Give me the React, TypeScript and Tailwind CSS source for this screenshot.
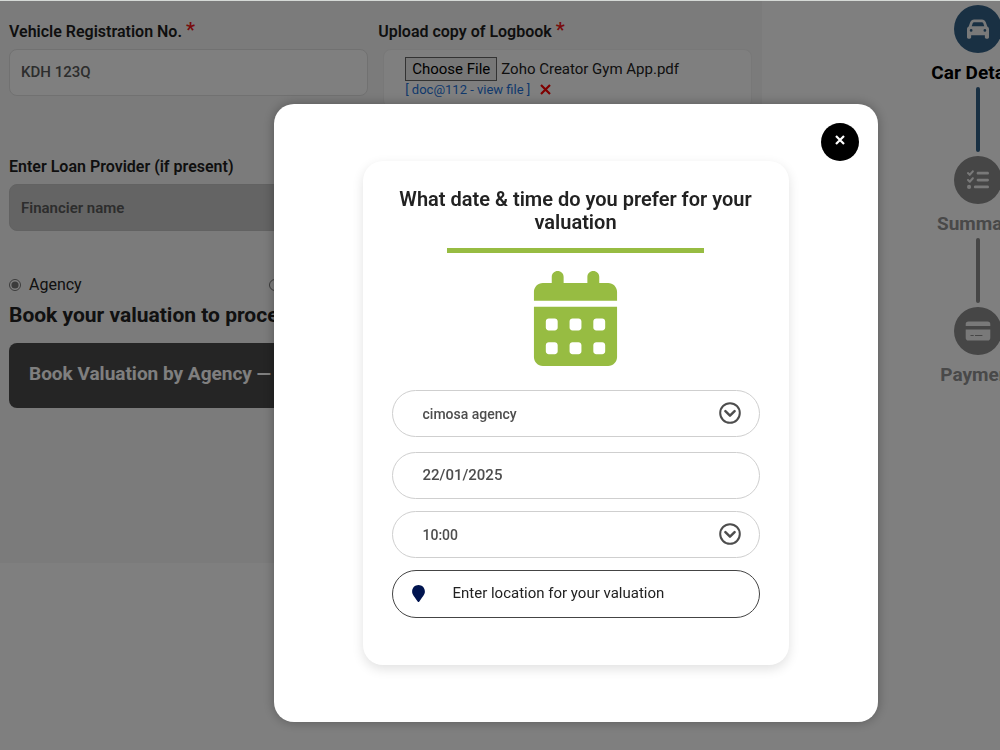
import { useRef } from "react";
import type { ReactNode } from "react";
import { FaCalendarDays, FaCar, FaListCheck } from "react-icons/fa6";
import { FaMapMarker } from "react-icons/fa";

function CardIcon() {
  return (
    <svg width="26" height="20" viewBox="0 0 26 20" fill="currentColor" aria-hidden="true">
      <path d="M3.5 0.5h19a2.8 2.8 0 0 1 2.8 2.8V5H0.7V3.3A2.8 2.8 0 0 1 3.5 0.5Z" />
      <path
        fillRule="evenodd"
        d="M0.7 8.4h24.6v8.4a2.8 2.8 0 0 1-2.8 2.8h-19a2.8 2.8 0 0 1-2.8-2.8ZM5.5 13.9v1h3.2v-1ZM10 13.9v1h7.4v-1Z"
      />
    </svg>
  );
}

function CircleChevron() {
  return (
    <svg
      className="pointer-events-none absolute right-[18px] top-1/2 -translate-y-1/2 text-[#4d4d4d]"
      width="24" height="24" viewBox="0 0 24 24" fill="none" stroke="currentColor" strokeLinecap="round" strokeLinejoin="round"
      aria-hidden="true"
    >
      <circle cx="12" cy="12" r="9.8" strokeWidth="2" />
      <path d="M7.4 10.2 12 14.6l4.6-4.4" strokeWidth="2.5" />
    </svg>
  );
}

interface Step {
  label: string;
  icon: ReactNode;
  active?: boolean;
}

const STEPS: Step[] = [
  { label: "Car Details", icon: <FaCar size={22} />, active: true },
  { label: "Summary", icon: <FaListCheck size={22} /> },
  { label: "Payment", icon: <CardIcon /> },
];

const LABEL = "block text-base leading-5 font-semibold text-[#1f1f1f]";
const PILL = "block w-full rounded-full border border-[#cfcfcf] bg-white pl-[30px] font-medium text-[#4d4d4d] outline-none";

function Required() {
  return <span className="text-xl leading-none text-[#f01818]">*</span>;
}

function Stepper() {
  return (
    <ol className="ml-48 flex w-12 shrink-0 flex-col items-center pt-1">
      {STEPS.map((step, idx) => (
        <li key={step.label} className="flex flex-col items-center">
          <span
            className={`flex h-12 w-12 items-center justify-center rounded-full text-[#f2f2f2] ${step.active ? "bg-[#336187]" : "bg-[#8c8c8c]"}`}
          >
            {step.icon}
          </span>
          <span
            className={`mt-2 whitespace-nowrap text-[19px] leading-6 font-bold ${step.active ? "text-black" : "text-[#929292]"}`}
          >
            {step.label}
          </span>
          {idx < STEPS.length - 1 && (
            <span className={`mt-0.5 mb-1 h-[65px] w-1 rounded-full ${step.active ? "bg-[#336187]" : "bg-[#8c8c8c]"}`} />
          )}
        </li>
      ))}
    </ol>
  );
}

function LoanForm() {
  const fileRef = useRef<HTMLInputElement>(null);

  return (
    <form className="w-[76.2%] shrink-0 bg-[#f6f6f6] pt-[19px] pr-2.5 pb-[155px] pl-[9px]">
      <div className="grid grid-cols-[49fr_51fr] gap-x-2.5">
        <div>
          <label htmlFor="reg" className={LABEL}>
            Vehicle Registration No. <Required />
          </label>
          <input
            id="reg"
            defaultValue="KDH 123Q"
            className="mt-[7px] h-[47px] w-full rounded-lg border border-[#e2e2e2] bg-white px-[11px] pb-0.5 text-[15px] font-medium text-[#5a5a5a]"
          />
          <label htmlFor="loan" className={`${LABEL} mt-[61px]`}>
            Enter Loan Provider (if present)
          </label>
          <input
            id="loan"
            disabled
            placeholder="Financier name"
            className="mt-[7px] h-[47px] w-full rounded-lg border border-[#c4c4c4] bg-[#c8c8c8] px-[11px] text-[15px] font-semibold placeholder:text-[#5a5a5a]"
          />
        </div>
        <div>
          <label htmlFor="logbook" className={LABEL}>
            Upload copy of Logbook <Required />
          </label>
          <div className="mt-[7px] ml-[5px] rounded-lg border border-[#f0f0f0] bg-white px-[21px] pt-[7px] pb-2">
            <div className="flex items-center gap-1 text-[15px] text-[#222]">
              <input id="logbook" ref={fileRef} type="file" className="hidden" />
              <button
                type="button"
                onClick={() => fileRef.current?.click()}
                className="h-6 border border-[#666] bg-[#efefef] px-1.5 leading-5 text-black"
              >
                Choose File
              </button>
              <span>Zoho Creator Gym App.pdf</span>
            </div>
            <div className="flex items-center gap-2.5 text-[13px] leading-[18px]">
              <a href="#logbook" className="text-[#2372d9]">[ doc@112 - view file ]</a>
              <button type="button" aria-label="Remove file" className="pb-0.5 text-[#ff0000]">
                <svg width="11" height="11" viewBox="0 0 11 11" stroke="currentColor" strokeWidth="2.2">
                  <path d="M1 1l9 9M10 1l-9 9" />
                </svg>
              </button>
            </div>
          </div>
        </div>
      </div>

      <div className="mt-11 grid grid-cols-[35fr_65fr] items-center">
        <label className="flex items-center gap-2 text-base leading-5 text-[#222]">
          <input type="radio" name="mode" defaultChecked className="m-0 h-3 w-3 accent-[#767676]" />
          Agency
        </label>
        <input type="radio" name="mode" aria-label="Other" className="m-0 h-3 w-3 accent-[#767676]" />
      </div>
      <h2 className="mt-2 text-[21px] leading-6 font-bold text-[#222]">Book your valuation to proceed</h2>
      <button
        type="button"
        className="mt-4 h-[65px] w-full rounded-lg bg-[#4a4a4a] px-5 pb-[3px] text-left text-[19px] font-bold text-white"
      >
        Book Valuation by Agency —
      </button>
    </form>
  );
}

function ValuationDialog() {
  return (
    <div
      role="dialog"
      aria-modal="true"
      aria-labelledby="dialog-title"
      className="relative w-full max-w-[604px] rounded-[20px] bg-white px-[89px] py-[57px] shadow-[0_0_12px_rgba(0,0,0,0.3)]"
    >
      <button
        type="button"
        aria-label="Close"
        className="absolute top-[19px] right-[19px] flex h-[38px] w-[38px] items-center justify-center rounded-full bg-black pb-[3px] text-white"
      >
        <svg width="10" height="10" viewBox="0 0 10 10" stroke="currentColor" strokeWidth="2.2">
          <path d="M1 1l8 8M9 1l-8 8" />
        </svg>
      </button>

      <form className="rounded-[20px] bg-white px-[29px] pt-[27px] pb-[47px] shadow-[0_4px_12px_rgba(0,0,0,0.12)]">
        <h1 id="dialog-title" className="text-center text-xl leading-[23px] font-semibold text-[#222]">
          What date &amp; time do you prefer for your valuation
        </h1>
        <div className="mx-auto mt-[14px] h-[5px] w-[70%] bg-[#97bc42]" />
        <FaCalendarDays size={95} className="mx-auto mt-[18px] text-[#97bc42]" />

        <div className="relative mt-6">
          <select aria-label="Agency" className={`${PILL} h-[47px] appearance-none pt-0.5 text-sm`}>
            <option>cimosa agency</option>
          </select>
          <CircleChevron />
        </div>
        <input aria-label="Date" defaultValue="22/01/2025" className={`${PILL} mt-[15px] h-[47px] text-[15px]`} />
        <div className="relative mt-3">
          <select aria-label="Time" className={`${PILL} h-[47px] appearance-none pt-0.5 text-sm`}>
            <option>10:00</option>
          </select>
          <CircleChevron />
        </div>
        <label className="mt-3 flex h-12 items-center gap-[26px] rounded-full border border-[#444] pl-[17px]">
          <FaMapMarker size={17} className="shrink-0 text-[#00144f]" />
          <input
            aria-label="Location"
            placeholder="Enter location for your valuation"
            className="min-w-0 flex-1 text-[15px] outline-none placeholder:text-[#222]"
          />
        </label>
      </form>
    </div>
  );
}

export default function App() {
  return (
    <div className="min-h-screen overflow-hidden border-t border-[#d5d9d6] bg-white font-['Roboto','Liberation_Sans',sans-serif]">
      <div className="flex items-start overflow-hidden">
        <LoanForm />
        <Stepper />
      </div>
      <div className="fixed inset-x-0 top-px bottom-0 flex items-center justify-center bg-black/50 pt-[74px] pl-[151px]">
        <ValuationDialog />
      </div>
    </div>
  );
}
